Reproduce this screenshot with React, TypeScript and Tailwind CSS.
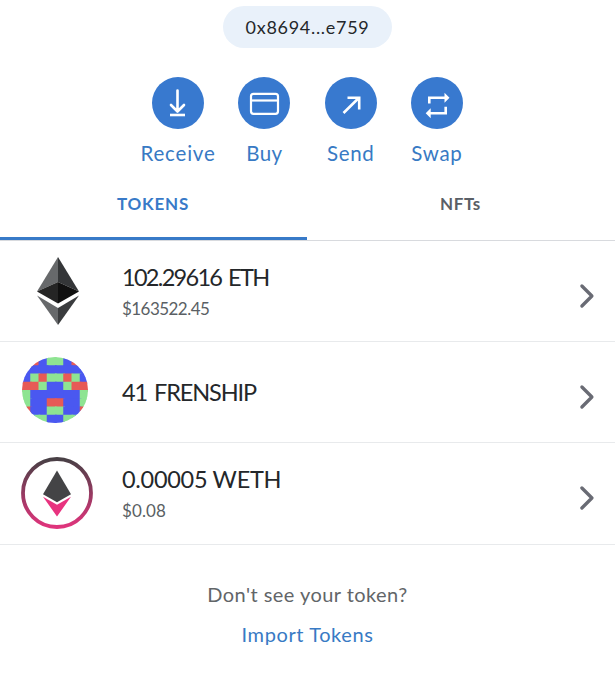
import { ReactNode } from "react";
import clsx from "clsx";

interface Action {
  label: string;
  icon: ReactNode;
  labelClass: string;
}

interface Token {
  balance: string;
  fiat?: string;
  logo: ReactNode;
  balanceClass: string;
  fiatClass?: string;
}

const blockieColors: Record<string, string> = {
  g: "#8ee492",
  b: "#4a58f0",
  r: "#e75a56",
};

const blockieRows = [
  "grbggbrg",
  "bbbbbbbb",
  "bgrggrgb",
  "rrgbbgrr",
  "gbbbbbbg",
  "gbbrrbbg",
  "rbbggbbr",
  "gggbbggg",
];

const EthLogo = () => (
  <svg width="42" height="68" viewBox="0 0 42 68">
    <path d="M21 0 0 34.5 21 25Z" fill="#67696b" />
    <path d="M21 0 42 34.5 21 25Z" fill="#343638" />
    <path d="M0 34.5 21 25V46.5Z" fill="#252525" />
    <path d="M42 34.5 21 25V46.5Z" fill="#101010" />
    <path d="M0 38.5 21 51V68Z" fill="#67696b" />
    <path d="M42 38.5 21 51V68Z" fill="#3a3c3e" />
  </svg>
);

// cells overlap slightly so no seams show between them
const BlockieLogo = () => (
  <svg width="66" height="66" viewBox="0 0 8 8" className="rounded-full">
    {blockieRows.map((row, y) =>
      row
        .split("")
        .map((cell, x) => (
          <rect
            key={`${x}-${y}`}
            x={x}
            y={y}
            width="1.2"
            height="1.2"
            fill={blockieColors[cell]}
          />
        ))
    )}
  </svg>
);

const WethLogo = () => (
  <svg width="72" height="72" viewBox="0 0 72 72">
    <defs>
      <linearGradient id="ring" x1="0" y1="0" x2="0" y2="1">
        <stop offset="0" stopColor="#484045" />
        <stop offset="1" stopColor="#e0347c" />
      </linearGradient>
    </defs>
    <circle
      cx="36"
      cy="36"
      r="34"
      fill="none"
      stroke="url(#ring)"
      strokeWidth="3.8"
    />
    <path d="M36 13.5 50 37.2 36 45.2 22 37.2Z" fill="#444446" />
    <path d="M22 39.8 36 47.8 50 39.8 36 59.5Z" fill="#e8337f" />
  </svg>
);

const Chevron = () => (
  <svg
    width="16"
    height="26"
    viewBox="0 0 16 26"
    fill="none"
    stroke="#696b74"
    strokeWidth="3.3"
    strokeLinecap="round"
    strokeLinejoin="round"
  >
    <path d="M2.9 3 12.9 13 2.9 23" />
  </svg>
);

const iconProps = {
  width: 52,
  height: 52,
  viewBox: "0 0 52 52",
  fill: "none",
  stroke: "#fff",
  strokeWidth: 2.6,
};

const actions: Action[] = [
  {
    label: "Receive",
    labelClass: "tracking-[0.8px]",
    icon: (
      <svg {...iconProps}>
        <path
          d="M25.5 13.5V34M19 28l6.5 6.5L32 28"
          strokeLinecap="round"
          strokeLinejoin="round"
        />
        <path d="M18 38h15" />
      </svg>
    ),
  },
  {
    label: "Buy",
    labelClass: "tracking-[0.4px]",
    icon: (
      <svg {...iconProps} strokeWidth={2.2}>
        <rect x="13" y="16.8" width="27" height="20" rx="2.5" />
        <path d="M13 23.5h27" />
      </svg>
    ),
  },
  {
    label: "Send",
    labelClass: "tracking-[0.6px]",
    icon: (
      <svg {...iconProps}>
        <path d="M18.5 36 34 20.7M22.5 20.7H34.2V32.5" />
      </svg>
    ),
  },
  {
    label: "Swap",
    labelClass: "tracking-[0.7px]",
    icon: (
      <svg {...iconProps}>
        <path d="M18.3 26.5V20.8H34M34.7 29.8V36.3H19" />
        <path
          d="M33.5 15.8 38.5 20.8 33.5 25.8ZM19.7 31.2 14.7 36.3 19.7 41.3Z"
          fill="#fff"
          stroke="none"
        />
      </svg>
    ),
  },
];

const tokens: Token[] = [
  {
    balance: "102.29616 ETH",
    fiat: "$163522.45",
    logo: <EthLogo />,
    balanceClass: "tracking-[-1.7px] [word-spacing:2.5px]",
    fiatClass: "tracking-[-0.55px]",
  },
  {
    balance: "41 FRENSHIP",
    logo: <BlockieLogo />,
    balanceClass: "tracking-[-1.1px] [word-spacing:2px]",
  },
  {
    balance: "0.00005 WETH",
    fiat: "$0.08",
    logo: <WethLogo />,
    balanceClass: "tracking-[-0.3px]",
    fiatClass: "tracking-[0.1px]",
  },
];

const TokenRow = ({ token, index }: { token: Token; index: number }) => (
  <li
    className={clsx(
      "flex border-b border-[#e8eaec]",
      index === 2 ? "h-[102px]" : "h-[101px]"
    )}
  >
    <div
      className={clsx(
        "flex w-[122px] shrink-0 items-center",
        index === 0 && "pl-[37px]",
        index === 1 && "pb-[5px] pl-[22px]",
        index === 2 && "pb-0.5 pl-[21px]"
      )}
    >
      {token.logo}
    </div>
    <div
      className={clsx(
        "flex flex-1 flex-col justify-center",
        index === 0 && "pt-0.5"
      )}
    >
      <p
        className={clsx(
          "text-[23.5px] leading-8 whitespace-nowrap text-[#24272a]",
          token.balanceClass
        )}
      >
        {token.balance}
      </p>
      {token.fiat && (
        <p
          className={clsx(
            "-mb-px pt-px text-[17px] leading-[30px] text-[#5a5f64]",
            token.fiatClass
          )}
        >
          {token.fiat}
        </p>
      )}
    </div>
    <div
      className={clsx(
        "flex items-center pr-[20px]",
        index === 2 ? "pt-2" : "pt-[10px]"
      )}
    >
      <Chevron />
    </div>
  </li>
);

export default function App() {
  return (
    <div className="h-[680px] w-[615px] overflow-hidden bg-white font-['Lato',sans-serif]">
      <div className="flex justify-center pt-1.5">
        <button className="h-[42px] w-[169px] rounded-full bg-[#e9f1fa] text-[18px] tracking-[0.7px] text-[#24272a]">
          0x8694...e759
        </button>
      </div>

      <div className="mt-[29px] flex justify-center">
        {actions.map((action) => (
          <button
            key={action.label}
            className="flex w-[86.3px] flex-col items-center"
          >
            <span className="size-[52px] rounded-full bg-[#3879cf]">
              {action.icon}
            </span>
            <span
              className={clsx(
                "mt-[9px] text-[20.5px] leading-[30px] text-[#387ac4]",
                action.labelClass
              )}
            >
              {action.label}
            </span>
          </button>
        ))}
      </div>

      <div className="mt-4 flex h-[57px] border-b border-[#d8dade] text-center text-[17px] font-bold">
        <button className="w-[307px] border-b-3 border-[#387ac8] pr-px pb-[13px] tracking-[0.8px] text-[#387ac8]">
          TOKENS
        </button>
        <button className="flex-1 pr-px pb-4 tracking-[0.6px] text-[#5a5f66]">
          NFTs
        </button>
      </div>

      <ul>
        {tokens.map((token, index) => (
          <TokenRow key={token.balance} token={token} index={index} />
        ))}
      </ul>

      <div className="flex flex-col items-center pt-[29px] text-[20px] leading-10">
        <p className="tracking-[0.45px] text-[#626568]">
          Don't see your token?
        </p>
        <button className="tracking-[0.6px] text-[#387ac4]">
          Import Tokens
        </button>
      </div>
    </div>
  );
}
